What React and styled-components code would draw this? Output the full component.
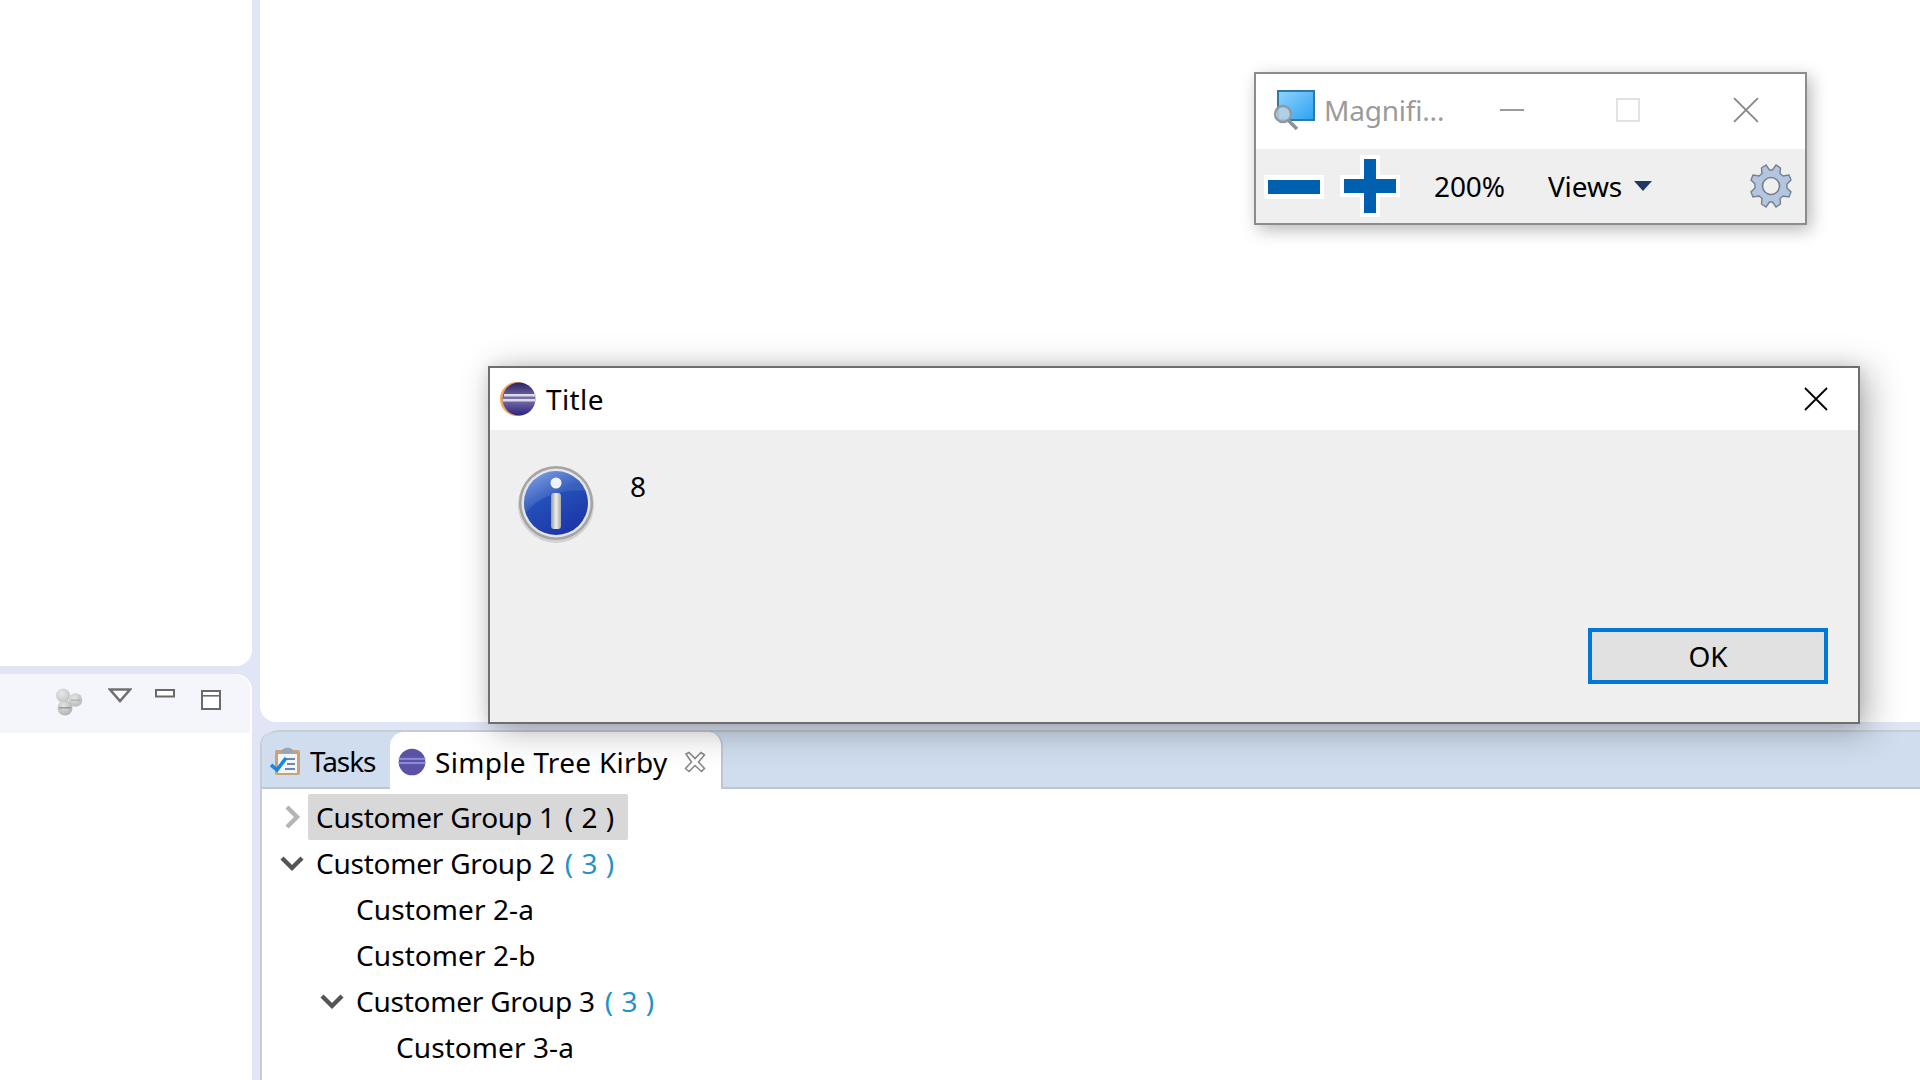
import React from "react";
import styled, { createGlobalStyle } from "styled-components";

const Global = createGlobalStyle`
  html, body { margin: 0; padding: 0; background: #e0e6f6; }
  body { font-family: "Noto Sans", "Open Sans", Arial, sans-serif; color: #000; overflow: hidden; }
  * { box-sizing: border-box; }
`;

const Page = styled.div`
  position: relative;
  width: 1920px;
  height: 1080px;
  overflow: hidden;
  display: grid;
  grid-template-columns: 252px 1fr;
  column-gap: 8px;
  background: #e0e6f6;
`;
const Column = styled.div`
  display: flex;
  flex-direction: column;
  gap: 8px;
  min-height: 0;
`;
const TopLeftPanel = styled.div`
  height: 666px;
  background: #fff;
  border-bottom-right-radius: 16px;
`;
const LowerLeftPanel = styled.div`
  flex: 1;
  background: #fff;
  border-top-right-radius: 16px;
  overflow: hidden;
`;
const ViewToolbar = styled.div`
  height: 59px;
  width: 250px;
  background: #f4f6fc;
  border-top-right-radius: 16px;
  display: flex;
  align-items: flex-start;
  padding: 14px 0 0 55px;
`;
const ToolIcon = styled.svg`
  display: block;
  flex: none;
  margin-right: ${(p) => p.$gap || 0}px;
  margin-top: ${(p) => p.$top || 0}px;
`;
const EditorArea = styled.div`
  height: 722px;
  background: #fff;
  border-bottom-left-radius: 16px;
`;
const Folder = styled.div`
  flex: 1;
  display: flex;
  flex-direction: column;
  background: #fff;
  border-left: 2px solid #c8ccd4;
  border-top-left-radius: 16px;
  overflow: hidden;
`;
const TabBar = styled.div`
  height: 59px;
  flex: none;
  display: flex;
  align-items: stretch;
  background: #cfddee;
  border-top: 2px solid #c8ccd4;
  border-bottom: 2px solid #c0c6d0;
  border-top-left-radius: 16px;
`;
const Tab = styled.div`
  display: flex;
  align-items: center;
  font-size: 28px;
  white-space: nowrap;
  height: ${(p) => (p.$active ? "57px" : "auto")};
  width: ${(p) => p.$width}px;
  padding-left: ${(p) => p.$pad}px;
  padding-top: 2px;
  background: ${(p) => (p.$active ? "#fff" : "transparent")};
  border-right: ${(p) => (p.$active ? "2px solid #c0c6d0" : "0")};
  border-top-left-radius: ${(p) => (p.$active ? "14px" : "0")};
  border-top-right-radius: ${(p) => (p.$active ? "14px" : "0")};
`;
const TabLabel = styled.span`
  margin: 0 ${(p) => p.$after || 0}px 0 ${(p) => p.$before || 0}px;
  letter-spacing: ${(p) => p.$spacing || 0}px;
`;
const Tree = styled.div`
  padding-top: 5px;
  display: flex;
  flex-direction: column;
`;
const Row = styled.div`
  height: 46px;
  display: flex;
  align-items: center;
  padding-left: ${(p) => p.$indent}px;
  font-size: 28px;
  white-space: nowrap;
`;
const Twist = styled.svg`
  width: 26px;
  height: 26px;
  flex: none;
  margin-right: 3px;
`;
const RowText = styled.span`
  display: flex;
  align-items: center;
  height: 46px;
  padding: 0 10px 0 ${(p) => (p.$leaf ? 0 : 8)}px;
  width: ${(p) => (p.$selected ? "320px" : "auto")};
  background: ${(p) => (p.$selected ? "#d8d8d8" : "transparent")};
  border-radius: 2px;
  white-space: pre;
  letter-spacing: ${(p) => (p.$leaf ? "0.08px" : "-0.23px")};
`;
const Count = styled.span`
  color: ${(p) => p.$color || "#1f93c8"};
  white-space: pre;
  letter-spacing: 0.5px;
  margin-left: 3px;
`;

const Dialog = styled.div`
  position: absolute;
  left: 488px;
  top: 366px;
  width: 1372px;
  height: 358px;
  background: #efefef;
  border: 2px solid #6e6e6e;
  box-shadow: 8px 6px 34px rgba(0, 0, 0, 0.3), 0 0 14px rgba(0, 0, 0, 0.1);
  display: flex;
  flex-direction: column;
`;
const DialogTitle = styled.div`
  height: 62px;
  background: #fff;
  display: flex;
  align-items: center;
  padding: 0 30px 0 10px;
  flex: none;
`;
const DialogTitleText = styled.span`
  font-size: 28px;
  letter-spacing: 0.4px;
  margin-left: 10px;
  flex: 1;
`;
const DialogBody = styled.div`
  flex: 1;
  display: flex;
  align-items: flex-start;
  padding: 35px 0 0 28px;
`;
const Message = styled.div`
  font-size: 28px;
  line-height: 38px;
  margin: 2px 0 0 36px;
`;
const DialogFooter = styled.div`
  display: flex;
  justify-content: flex-end;
  padding: 0 30px 38px 0;
`;
const OkButton = styled.button`
  width: 240px;
  height: 56px;
  border: 4px solid #0078d7;
  background: #e1e1e1;
  font: inherit;
  font-size: 28px;
  color: #000;
  padding: 0;
`;

const Magnifier = styled.div`
  position: absolute;
  left: 1254px;
  top: 72px;
  width: 553px;
  height: 153px;
  background: #efefef;
  border: 2px solid #8c8c8c;
  box-shadow: 4px 5px 16px rgba(0, 0, 0, 0.28);
  display: flex;
  flex-direction: column;
`;
const MagTitle = styled.div`
  height: 75px;
  flex: none;
  background: #fff;
  display: flex;
  align-items: center;
  padding: 0 0 3px 17px;
`;
const MagTitleText = styled.span`
  font-size: 28px;
  letter-spacing: -0.2px;
  color: #9b9b9b;
  margin-left: 9px;
  width: 176px;
`;
const MagBar = styled.div`
  flex: 1;
  display: flex;
  align-items: center;
  padding-left: 8px;
  font-size: 28px;
`;
const MagValue = styled.span`
  margin: 0 ${(p) => p.$after || 0}px 0 ${(p) => p.$before || 0}px;
  letter-spacing: -0.1px;
`;

const EclipseIcon = ({ size = 36, dim }) => (
  <ToolIcon width={size} height={size} viewBox="0 0 36 36">
    <defs>
      <linearGradient id="ecl" x1="0" y1="0" x2="0" y2="1">
        <stop offset="0" stopColor="#2c2266" />
        <stop offset="0.5" stopColor="#7a74a8" />
        <stop offset="1" stopColor="#2c2280" />
      </linearGradient>
    </defs>
    {!dim && <circle cx="17" cy="18" r="17" fill="#f3a65a" />}
    <circle cx={dim ? 18 : 19} cy="18" r={dim ? 16 : 16.5} fill={dim ? "#5a52a4" : "url(#ecl)"} />
    <rect x={dim ? 2 : 4} y="13" width="32" height="2.5" fill={dim ? "#8d89d6" : "#dcdae8"} />
    <rect x={dim ? 2 : 3} y="18" width="32" height="2.5" fill={dim ? "#8d89d6" : "#dcdae8"} />
  </ToolIcon>
);

const InfoIcon = () => (
  <ToolIcon width="76" height="80" viewBox="0 0 76 80">
    <defs>
      <linearGradient id="infoBlue" x1="0.2" y1="0" x2="0.7" y2="1">
        <stop offset="0" stopColor="#6c92e0" />
        <stop offset="0.4" stopColor="#2450b8" />
        <stop offset="1" stopColor="#1c34a8" />
      </linearGradient>
      <linearGradient id="infoBar" x1="0" y1="0" x2="1" y2="0">
        <stop offset="0" stopColor="#9a9a9a" />
        <stop offset="0.5" stopColor="#eeeeee" />
        <stop offset="1" stopColor="#a8a8a8" />
      </linearGradient>
    </defs>
    <circle cx="38" cy="40" r="38" fill="#bdbdbd" opacity="0.6" />
    <circle cx="38" cy="38" r="37" fill="#a4a4a4" />
    <circle cx="38" cy="38" r="34.5" fill="#e4e4e4" />
    <circle cx="38" cy="38" r="32" fill="url(#infoBlue)" />
    <path d="M8 48 C22 28 50 24 70 26 A32 32 0 0 0 8 48 Z" fill="#fff" opacity="0.1" />
    <circle cx="38" cy="18" r="5.5" fill="#f0f3fb" />
    <rect x="33" y="28" width="10" height="36" rx="3" fill="url(#infoBar)" />
  </ToolIcon>
);

const Close = ({ size = 24, color = "#000" }) => (
  <ToolIcon width={size} height={size} viewBox="0 0 24 24">
    <path d="M1 1 L23 23 M23 1 L1 23" stroke={color} strokeWidth="1.8" fill="none" />
  </ToolIcon>
);

const TasksIcon = () => (
  <ToolIcon width="32" height="32" viewBox="0 0 32 32">
    <rect x="5" y="5" width="25" height="25" rx="2" fill="#c9a377" />
    <rect x="8" y="9" width="19" height="19" fill="#f4f6fa" />
    <path d="M11 8 C11 1 24 1 24 8 Z" fill="#9aa6b8" />
    <rect x="16" y="13" width="9" height="2" fill="#6f86ae" />
    <rect x="17" y="18" width="8" height="2" fill="#6f86ae" />
    <rect x="15" y="23" width="10" height="2" fill="#6f86ae" />
    <path d="M1 20 L7 25 L16 13" stroke="#1a86e0" strokeWidth="3.6" fill="none" />
  </ToolIcon>
);

const TabClose = () => (
  <ToolIcon width="22" height="22" viewBox="0 0 22 22">
    <path
      d="M2 3 L5 1.5 L11 7.5 L17 1.5 L20.5 4 L14.5 11 L20.5 17.5 L17.5 20.5 L11 14.5 L5 20.5 L1.5 17.5 L7.5 11 Z"
      fill="none"
      stroke="#8a8a8a"
      strokeWidth="1.6"
    />
  </ToolIcon>
);

const Chevron = ({ open, color }) => (
  <Twist viewBox="0 0 26 26">
    <path
      d={open ? "M3 8 L13 18 L23 8" : "M8 3 L18 13 L8 23"}
      stroke={color}
      strokeWidth="4.4"
      fill="none"
    />
  </Twist>
);

const Balls = () => (
  <ToolIcon width="28" height="28" viewBox="0 0 28 28" $gap={25}>
    <defs>
      <radialGradient id="ball" cx="0.4" cy="0.35" r="0.8">
        <stop offset="0" stopColor="#e4e4e4" />
        <stop offset="1" stopColor="#a8a8a8" />
      </radialGradient>
    </defs>
    <circle cx="8" cy="7.5" r="7" fill="url(#ball)" opacity="0.75" />
    <circle cx="20.5" cy="12" r="6.8" fill="url(#ball)" opacity="0.9" />
    <circle cx="10" cy="20" r="7.5" fill="url(#ball)" />
    <rect x="4" y="19" width="12" height="1.6" fill="#888" opacity="0.7" />
    <rect x="16" y="11.4" width="9" height="1.4" fill="#999" opacity="0.6" />
  </ToolIcon>
);

const MagnifierIcon = () => (
  <ToolIcon width="42" height="40" viewBox="0 0 42 40">
    <defs>
      <linearGradient id="scr" x1="0" y1="0" x2="1" y2="1">
        <stop offset="0" stopColor="#8fd4ff" />
        <stop offset="1" stopColor="#2ea0f2" />
      </linearGradient>
    </defs>
    <rect x="5" y="1" width="36" height="29" fill="url(#scr)" stroke="#2d7aa8" strokeWidth="2" />
    <circle cx="10" cy="24" r="8" fill="#c8d8e0" fillOpacity="0.75" stroke="#8e9aa2" strokeWidth="2.4" />
    <path d="M15 30 L24 39" stroke="#8a949a" strokeWidth="3.6" />
  </ToolIcon>
);

const Gear = () => (
  <ToolIcon width="42" height="46" viewBox="-21 -23 42 46">
    <path
      d="M-5 -21 L-1.5 -16 L1.5 -16 L5 -21 L9.5 -18 L9 -12.5 L12 -10 L18 -11 L20 -6 L16 -2 L16 2 L20 6 L18 11 L12 10 L9 12.5 L9.5 18 L5 21 L1.5 16 L-1.5 16 L-5 21 L-9.5 18 L-9 12.5 L-12 10 L-18 11 L-20 6 L-16 2 L-16 -2 L-20 -6 L-18 -11 L-12 -10 L-9 -12.5 L-9.5 -18 Z"
      fill="#b4c5df"
      stroke="#75808f"
      strokeWidth="1.4"
    />
    <circle r="8.5" fill="#efefef" stroke="#75808f" strokeWidth="1.6" />
  </ToolIcon>
);

const BlueMinus = () => (
  <ToolIcon width="60" height="24" viewBox="0 0 60 24" $gap={16} $top={2}>
    <rect x="0" y="0" width="60" height="24" fill="#fff" />
    <rect x="4" y="5" width="52" height="14" fill="#0060b0" />
  </ToolIcon>
);
const BluePlus = () => (
  <ToolIcon width="60" height="62" viewBox="0 0 60 62">
    <path d="M20 0 H40 V20 H60 V42 H40 V62 H20 V42 H0 V20 H20 Z" fill="#fff" />
    <path d="M24 4 H36 V24 H56 V38 H36 V58 H24 V38 H4 V24 H24 Z" fill="#0060b0" />
  </ToolIcon>
);

export default function App() {
  return (
    <Page>
      <Global />
      <Column>
        <TopLeftPanel />
        <LowerLeftPanel>
          <ViewToolbar>
            <Balls />
            <ToolIcon width="24" height="16" viewBox="0 0 24 16" $gap={23}>
              <path d="M2 1.5 H22 L12 13 Z" fill="#fff" stroke="#707070" strokeWidth="2.6" />
            </ToolIcon>
            <ToolIcon width="20" height="9" viewBox="0 0 20 9" $gap={26} $top={1}>
              <rect x="1" y="1" width="18" height="6.5" fill="#fff" stroke="#6a6a6a" strokeWidth="2" />
            </ToolIcon>
            <ToolIcon width="20" height="20" viewBox="0 0 20 20" $top={2}>
              <rect x="1" y="1" width="18" height="18" fill="#fff" stroke="#6a6a6a" strokeWidth="2" />
              <rect x="1" y="5" width="18" height="1.6" fill="#6a6a6a" />
            </ToolIcon>
          </ViewToolbar>
        </LowerLeftPanel>
      </Column>
      <Column>
        <EditorArea />
        <Folder>
          <TabBar>
            <Tab $width={128} $pad={8}>
              <TasksIcon />
              <TabLabel $before={8} $spacing={-1.1}>Tasks</TabLabel>
            </Tab>
            <Tab $active $width={333} $pad={7}>
              <EclipseIcon size={30} dim />
              <TabLabel $before={8} $after={16} $spacing={0.3}>Simple Tree Kirby</TabLabel>
              <TabClose />
            </Tab>
          </TabBar>
          <Tree>
            <Row $indent={17}>
              <Chevron color="#b4b4b4" />
              <RowText $selected>
                Customer Group 1 <Count $color="#000">( 2 )</Count>
              </RowText>
            </Row>
            <Row $indent={17}>
              <Chevron open color="#555" />
              <RowText>
                Customer Group 2 <Count>( 3 )</Count>
              </RowText>
            </Row>
            <Row $indent={94}>
              <RowText $leaf>Customer 2-a</RowText>
            </Row>
            <Row $indent={94}>
              <RowText $leaf>Customer 2-b</RowText>
            </Row>
            <Row $indent={57}>
              <Chevron open color="#555" />
              <RowText>
                Customer Group 3 <Count>( 3 )</Count>
              </RowText>
            </Row>
            <Row $indent={134}>
              <RowText $leaf>Customer 3-a</RowText>
            </Row>
          </Tree>
        </Folder>
      </Column>

      <Magnifier>
        <MagTitle>
          <MagnifierIcon />
          <MagTitleText>Magnifi...</MagTitleText>
          <ToolIcon width="24" height="2" viewBox="0 0 24 2" $gap={92}>
            <rect width="24" height="2" fill="#9a9a9a" />
          </ToolIcon>
          <ToolIcon width="24" height="24" viewBox="0 0 24 24" $gap={93}>
            <rect x="1" y="1" width="22" height="22" fill="none" stroke="#e2e2e2" strokeWidth="2" />
          </ToolIcon>
          <Close size={26} color="#8a8a8a" />
        </MagTitle>
        <MagBar>
          <BlueMinus />
          <BluePlus />
          <MagValue $before={34} $after={43}>200%</MagValue>
          <MagValue $after={11}>Views</MagValue>
          <ToolIcon width="20" height="12" viewBox="0 0 20 12" $gap={97}>
            <path d="M1 1 H19 L10 11 Z" fill="#1f3864" />
          </ToolIcon>
          <Gear />
        </MagBar>
      </Magnifier>

      <Dialog>
        <DialogTitle>
          <EclipseIcon />
          <DialogTitleText>Title</DialogTitleText>
          <Close />
        </DialogTitle>
        <DialogBody>
          <InfoIcon />
          <Message>8</Message>
        </DialogBody>
        <DialogFooter>
          <OkButton>OK</OkButton>
        </DialogFooter>
      </Dialog>
    </Page>
  );
}
